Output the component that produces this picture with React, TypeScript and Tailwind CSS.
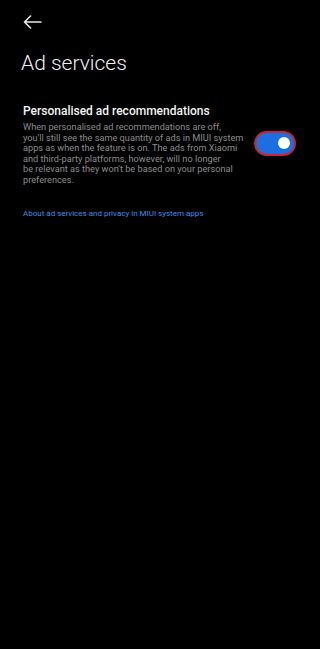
import React from "react";

export default function App() {
  return (
    <div
      className="w-[320px] h-[649px] bg-black text-white overflow-hidden"
      style={{ fontFamily: "Roboto, 'Noto Sans', sans-serif" }}
    >
      <div className="pl-[23px] pt-[14px] h-[16px] box-content flex items-center">
        <svg width="19" height="14" viewBox="0 0 19 14" fill="none">
          <path d="M18 7H1.5M7.5 1L1.5 7L7.5 13" stroke="#e8e8e8" strokeWidth="1.6" strokeLinecap="round" strokeLinejoin="round" />
        </svg>
      </div>
      <h1 className="pl-[21px] mt-[19px] text-[21px] leading-[28px] font-light text-[#f2f2f2]">Ad services</h1>
      <div className="mt-[26px] pl-[23px] pr-[24px] flex items-center justify-between">
        <div className="w-[226px]">
          <div className="text-[12px] leading-[17px] font-medium text-[#f4f4f4]">Personalised ad recommendations</div>
          <p className="mt-[2px] text-[9.2px] leading-[10.6px] text-[#8c8c8c]">
            When personalised ad recommendations are off,<br />
            you'll still see the same quantity of ads in MIUI system<br />
            apps as when the feature is on. The ads from Xiaomi<br />
            and third-party platforms, however, will no longer<br />
            be relevant as they won't be based on your personal<br />
            preferences.
          </p>
        </div>
        <div className="mt-[-2px] w-[42px] h-[25px] rounded-full border-2 border-[#d0212c] bg-[#1b6fe0] flex items-center justify-end pr-[4px]">
          <div className="w-[12px] h-[12px] rounded-full bg-white" />
        </div>
      </div>
      <div className="mt-[23px] pl-[23px] text-[8px] leading-[10px] text-[#3d8fe6]">
        About ad services and privacy in MIUI system apps
      </div>
    </div>
  );
}
